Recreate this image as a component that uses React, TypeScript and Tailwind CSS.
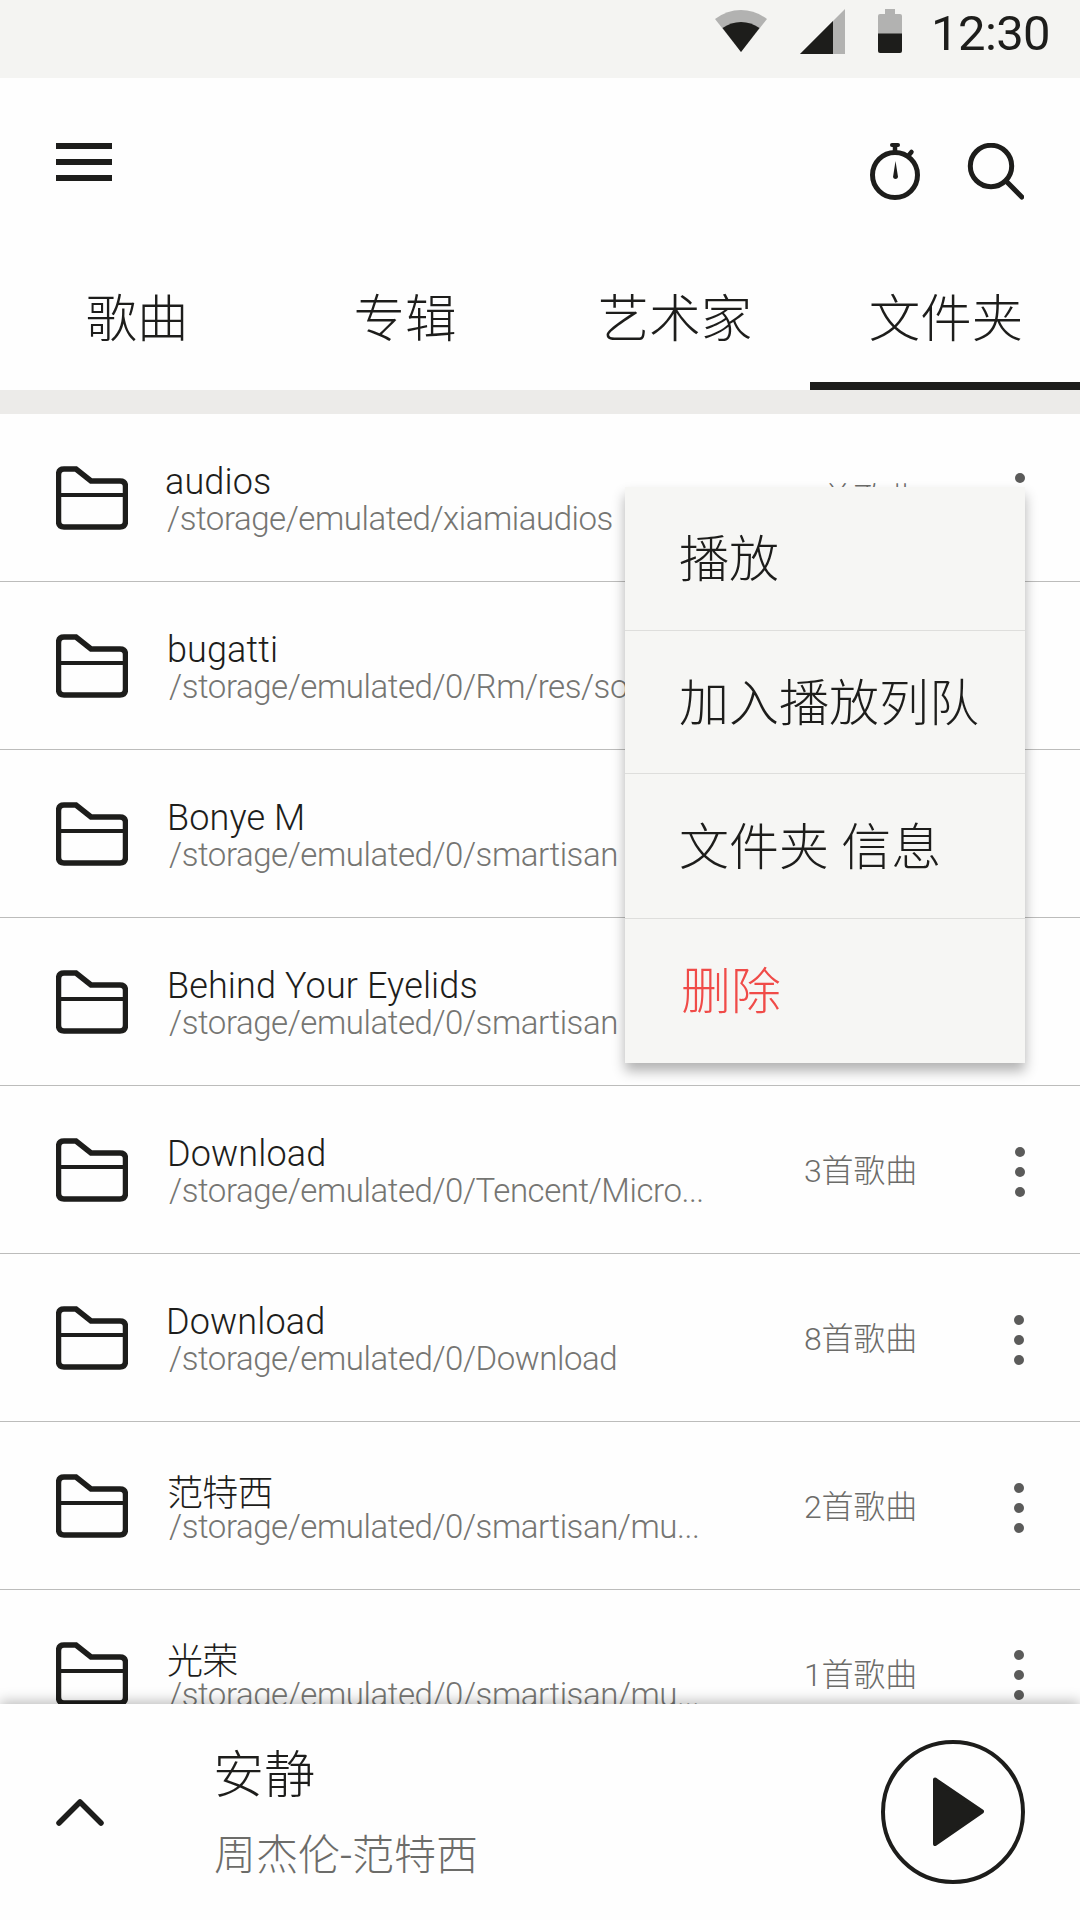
const rows = [
  { name: 'audios', path: '/storage/emulated/xiamiaudios', count: '8首歌曲', nameX: 'pl-[165px] tracking-[0.13px]', pathX: 'pl-[167px]', dots: 'mt-[59px] mr-[55px]' },
  { name: 'bugatti', path: '/storage/emulated/0/Rm/res/so...', count: '5首歌曲', nameX: 'pl-[167px] tracking-[0.13px]', pathX: 'pl-[169px]', dots: 'mt-[60px] mr-[55px]' },
  { name: 'Bonye M', path: '/storage/emulated/0/smartisan', count: '4首歌曲', nameX: 'pl-[167px] tracking-[0.13px]', pathX: 'pl-[169px]', dots: 'mt-[60px] mr-[55px]' },
  { name: 'Behind Your Eyelids', path: '/storage/emulated/0/smartisan', count: '6首歌曲', nameX: 'pl-[167px] tracking-[0.13px]', pathX: 'pl-[169px]', dots: 'mt-[60px] mr-[55px]' },
  { name: 'Download', path: '/storage/emulated/0/Tencent/Micro...', count: '3首歌曲', nameX: 'pl-[167px] tracking-[0.13px]', pathX: 'pl-[169px]', dots: 'mt-[61px] mr-[55px]' },
  { name: 'Download', path: '/storage/emulated/0/Download', count: '8首歌曲', nameX: 'pl-[166px] tracking-[0.13px]', pathX: 'pl-[169px]', dots: 'mt-[61px] mr-[56px]' },
  { name: '范特西', path: '/storage/emulated/0/smartisan/mu...', count: '2首歌曲', nameX: 'pl-[167px] pt-[4px] tracking-[-0.7px]', pathX: 'pl-[169px]', dots: 'mt-[61px] mr-[56px]' },
  { name: '光荣', path: '/storage/emulated/0/smartisan/mu...', count: '1首歌曲', nameX: 'pl-[167px] pt-[4px] tracking-[-0.7px]', pathX: 'pl-[169px]', dots: 'mt-[60px] mr-[56px]' },
];

function FolderIcon() {
  return (
    <svg className="absolute left-14 top-[52px] h-16 w-[72px]" viewBox="0 0 72 64" fill="none" stroke="#1d1d1b">
      <path d="M8 3H20L35 15H64Q69.5 15 69.5 20.500V55Q69.500 61 64 61H8Q2.500 61 2.500 55V9Q2.500 3 8 3Z" strokeWidth="5.500" />
      <path d="M4 29H68" strokeWidth="4" />
    </svg>
  );
}

function StatusBar() {
  return (
    <div className="flex h-[78px] shrink-0 bg-[#f4f4f2]">
      <svg className="ml-[714px] h-[60px] w-[200px]" viewBox="714 0 200 60">
        <path d="M741 52L715 19Q727 10 741 10T767 19Z" fill="#b2b2b1" />
        <path d="M741 52L722.500 28Q731 22 741 22T759.500 28Z" fill="#1d1d1b" />
        <path d="M800 54L845 9V54Z" fill="#b2b2b1" />
        <path d="M800 54L833 21V54Z" fill="#1d1d1b" />
        <path d="M885 9H895V14H900Q902 14 902 16V34H878V16Q878 14 880 14H885Z" fill="#b2b2b1" />
        <path d="M878 33.500H902V51Q902 53 900 53H880Q878 53 878 51Z" fill="#1d1d1b" />
      </svg>
      <span className="ml-[17px] mt-[2px] text-[49px] leading-[63px] tracking-[-0.6px]">12:30</span>
    </div>
  );
}

function Toolbar() {
  return (
    <div className="flex h-[164px] shrink-0 items-start justify-between px-14 pt-[65px]">
      <div className="flex w-14 flex-col gap-[10px]">
        <i className="h-[6px] bg-[#1d1d1b]" />
        <i className="h-[6px] bg-[#1d1d1b]" />
        <i className="h-[6px] bg-[#1d1d1b]" />
      </div>
      <svg className="h-[60px] w-[156px]" viewBox="868 143 156 60" fill="none" stroke="#1d1d1b">
        <circle cx="895" cy="175" r="22.500" strokeWidth="5" />
        <path d="M892 145H898" strokeWidth="4" strokeLinecap="round" />
        <path d="M895 145V151" strokeWidth="4.500" />
        <path d="M909 155L911.500 152" strokeWidth="4.500" strokeLinecap="round" />
        <path d="M895.500 161L898 177Q897.500 179 895.500 179T893 177Z" fill="#1d1d1b" stroke="none" />
        <circle cx="991" cy="166" r="20.700" strokeWidth="5" />
        <path d="M1006 181L1021.800 197" strokeWidth="5" strokeLinecap="round" />
      </svg>
    </div>
  );
}

function Tabs() {
  return (
    <div className="grid h-[148px] shrink-0 grid-cols-4 text-center text-[51.5px] font-light leading-[140px]">
      <span className="pl-[4px] pt-2">歌曲</span>
      <span className="pt-2">专辑</span>
      <span className="pt-2">艺术家</span>
      <span className="h-[148px] border-b-8 border-[#1d1d1b] pl-[2px] pt-2">文件夹</span>
    </div>
  );
}

function FolderRow({ row }: { row: (typeof rows)[number] }) {
  return (
    <div className="relative flex h-[168px] shrink-0 items-start border-b border-[#bcbcbb]">
      <FolderIcon />
      <div className="w-[804px] shrink-0 whitespace-nowrap pt-[48px] font-light">
        <div className={'h-[38px] text-[36px] leading-[40px] ' + row.nameX}>{row.name}</div>
        <div className={'h-[38px] text-[33px] leading-[38px] tracking-[-0.44px] text-[#757572] ' + row.pathX}>{row.path}</div>
      </div>
      <span className="mt-[63px] whitespace-nowrap text-[32px] font-light leading-[44px] tracking-[-0.2px] text-[#6c6c69]">{row.count}</span>
      <div className={'ml-auto flex flex-col gap-[10px] ' + row.dots}>
        <i className="size-[10px] rounded-full bg-[#5b5b5a]" />
        <i className="size-[10px] rounded-full bg-[#5b5b5a]" />
        <i className="size-[10px] rounded-full bg-[#5b5b5a]" />
      </div>
    </div>
  );
}

function ContextMenu() {
  return (
    <div className="absolute left-[625px] top-[487px] w-[400px] bg-[#f6f6f4] text-[50px] font-light leading-[147px] shadow-[0_8px_12px_rgba(0,0,0,0.3)]">
      <div className="h-[144px] border-b border-[#dededc] pl-[54px]">播放</div>
      <div className="h-[143px] border-b border-[#dededc] pl-[54px]">加入播放列队</div>
      <div className="h-[145px] border-b border-[#dededc] pl-[54px] leading-[149px]">文件夹 信息</div>
      <div className="h-[144px] pl-[56px] text-[#f04b48]">删除</div>
    </div>
  );
}

function Player() {
  return (
    <div className="relative flex h-[216px] shrink-0 bg-[#fefefe] shadow-[0_-3px_12px_rgba(0,0,0,0.25)]">
      <svg className="ml-14 mt-[92px] h-[34px] w-12" viewBox="0 0 48 34" fill="none" stroke="#1d1d1b" strokeWidth="5.500" strokeLinecap="round">
        <path d="M3 27L24 6L45 27" strokeLinejoin="round" />
      </svg>
      <div className="ml-[109px] flex flex-col font-light">
        <span className="mt-[36px] text-[51px] leading-[72px]">安静</span>
        <span className="ml-px mt-[14px] text-[42px] leading-[60px] text-[#6c6c69]">周杰伦-范特西</span>
      </div>
      <svg className="ml-auto mr-[55px] mt-9 size-36" viewBox="0 0 144 144" fill="none">
        <circle cx="72" cy="72" r="70" stroke="#1d1d1b" strokeWidth="4" />
        <path d="M54 39.500L101 71.500L54 104Z" fill="#1d1d1b" stroke="#1d1d1b" strokeWidth="4" strokeLinejoin="round" />
      </svg>
    </div>
  );
}

export default function App() {
  return (
    <div lang="zh-CN" className="relative flex h-[1920px] w-[1080px] flex-col overflow-hidden bg-[#fefefe] font-[Roboto,'Noto_Sans_CJK_SC',sans-serif] text-[#1d1d1b]">
      <StatusBar />
      <Toolbar />
      <Tabs />
      <div className="h-6 shrink-0 bg-[#ecebe9]" />
      <div className="flex h-[1290px] shrink-0 flex-col overflow-hidden">
        {rows.map((row, i) => (
          <FolderRow key={i} row={row} />
        ))}
      </div>
      <Player />
      <ContextMenu />
    </div>
  );
}
